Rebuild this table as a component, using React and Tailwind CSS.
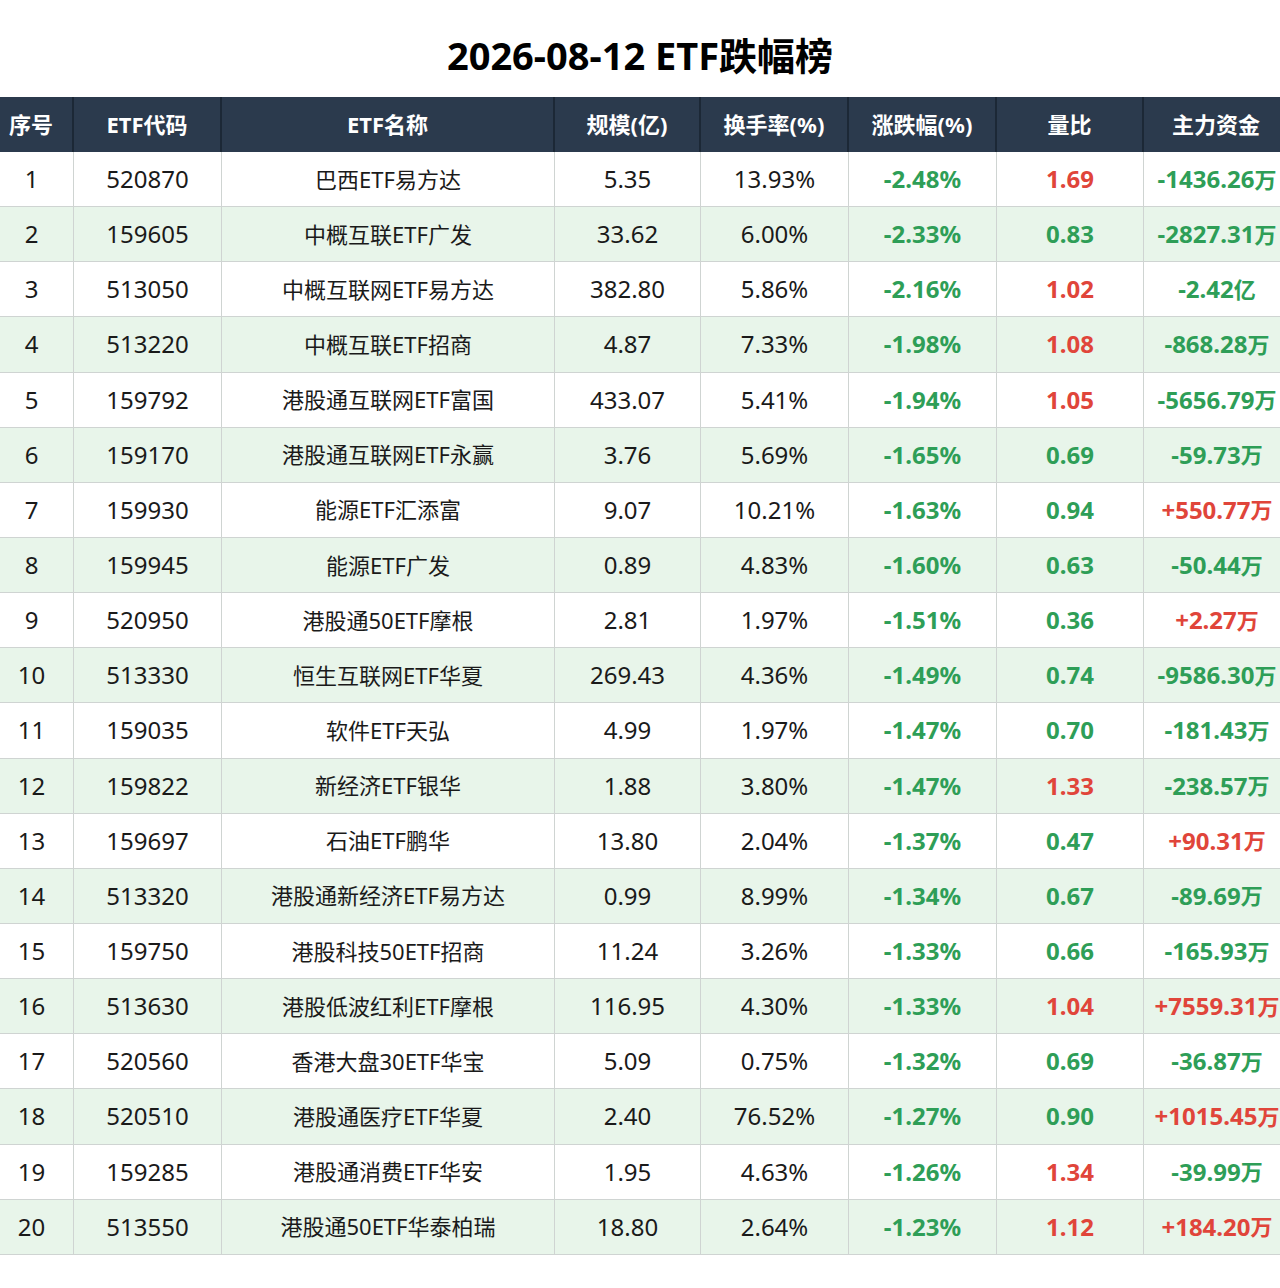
import React from "react";

const rows = [
  [1, "520870", "巴西ETF易方达", "5.35", "13.93%", "-2.48%", "1.69", "-1436.26万"],
  [2, "159605", "中概互联ETF广发", "33.62", "6.00%", "-2.33%", "0.83", "-2827.31万"],
  [3, "513050", "中概互联网ETF易方达", "382.80", "5.86%", "-2.16%", "1.02", "-2.42亿"],
  [4, "513220", "中概互联ETF招商", "4.87", "7.33%", "-1.98%", "1.08", "-868.28万"],
  [5, "159792", "港股通互联网ETF富国", "433.07", "5.41%", "-1.94%", "1.05", "-5656.79万"],
  [6, "159170", "港股通互联网ETF永赢", "3.76", "5.69%", "-1.65%", "0.69", "-59.73万"],
  [7, "159930", "能源ETF汇添富", "9.07", "10.21%", "-1.63%", "0.94", "+550.77万"],
  [8, "159945", "能源ETF广发", "0.89", "4.83%", "-1.60%", "0.63", "-50.44万"],
  [9, "520950", "港股通50ETF摩根", "2.81", "1.97%", "-1.51%", "0.36", "+2.27万"],
  [10, "513330", "恒生互联网ETF华夏", "269.43", "4.36%", "-1.49%", "0.74", "-9586.30万"],
  [11, "159035", "软件ETF天弘", "4.99", "1.97%", "-1.47%", "0.70", "-181.43万"],
  [12, "159822", "新经济ETF银华", "1.88", "3.80%", "-1.47%", "1.33", "-238.57万"],
  [13, "159697", "石油ETF鹏华", "13.80", "2.04%", "-1.37%", "0.47", "+90.31万"],
  [14, "513320", "港股通新经济ETF易方达", "0.99", "8.99%", "-1.34%", "0.67", "-89.69万"],
  [15, "159750", "港股科技50ETF招商", "11.24", "3.26%", "-1.33%", "0.66", "-165.93万"],
  [16, "513630", "港股低波红利ETF摩根", "116.95", "4.30%", "-1.33%", "1.04", "+7559.31万"],
  [17, "520560", "香港大盘30ETF华宝", "5.09", "0.75%", "-1.32%", "0.69", "-36.87万"],
  [18, "520510", "港股通医疗ETF华夏", "2.40", "76.52%", "-1.27%", "0.90", "+1015.45万"],
  [19, "159285", "港股通消费ETF华安", "1.95", "4.63%", "-1.26%", "1.34", "-39.99万"],
  [20, "513550", "港股通50ETF华泰柏瑞", "18.80", "2.64%", "-1.23%", "1.12", "+184.20万"],
];

const headers = ["序号", "ETF代码", "ETF名称", "规模(亿)", "换手率(%)", "涨跌幅(%)", "量比", "主力资金"];
const widths = ["w-[84px]", "w-[148px]", "w-[333px]", "w-[146px]", "w-[148px]", "w-[148px]", "w-[147px]", "w-[146px]"];

const green = "text-[#2e9e57]";
const red = "text-[#e0453a]";
const cell = "shrink-0 flex items-center justify-center border-r border-[#cfd4d2]";

function signColor(v) {
  return v.startsWith("-") ? green : red;
}

export default function App() {
  return (
    <div
      className="w-[1280px] h-[1288px] overflow-hidden bg-white text-[#1a1a1a]"
      style={{ fontFamily: '"Noto Sans", "Noto Sans CJK SC", sans-serif' }}
    >
      <div className="h-[97px] flex items-center justify-center pt-[14px]">
        <h1 className="text-[38px] font-bold text-black">2026-08-12 ETF跌幅榜</h1>
      </div>

      <div className="ml-[-10px] w-[1300px]">
        {/* header */}
        <div className="flex h-[55px] bg-[#2b3a4d] text-white font-bold text-[22px]">
          {headers.map((h, i) => (
            <div
              key={h}
              className={`${widths[i]} shrink-0 flex items-center justify-center border-r-2 border-[#1c2836]`}
            >
              {h}
            </div>
          ))}
        </div>

        {rows.map((r, idx) => (
          <div
            key={r[0]}
            className={`flex h-[55.15px] text-[24px] border-b border-[#cfd4d2] ${idx % 2 === 1 ? "bg-[#e8f5ea]" : "bg-white"}`}
          >
            <div className={`${widths[0]} ${cell}`}>{r[0]}</div>
            <div className={`${widths[1]} ${cell}`}>{r[1]}</div>
            <div className={`${widths[2]} ${cell} text-[22px]`}>{r[2]}</div>
            <div className={`${widths[3]} ${cell}`}>{r[3]}</div>
            <div className={`${widths[4]} ${cell}`}>{r[4]}</div>
            <div className={`${widths[5]} ${cell} font-bold ${green}`}>{r[5]}</div>
            <div className={`${widths[6]} ${cell} font-bold ${parseFloat(r[6]) >= 1 ? red : green}`}>{r[6]}</div>
            <div className={`${widths[7]} shrink-0 flex items-center justify-center font-bold whitespace-nowrap ${signColor(r[7])}`}>
              <span>{r[7].slice(0, -1)}</span>
              <span className="text-[22px]">{r[7].slice(-1)}</span>
            </div>
          </div>
        ))}
      </div>
    </div>
  );
}
